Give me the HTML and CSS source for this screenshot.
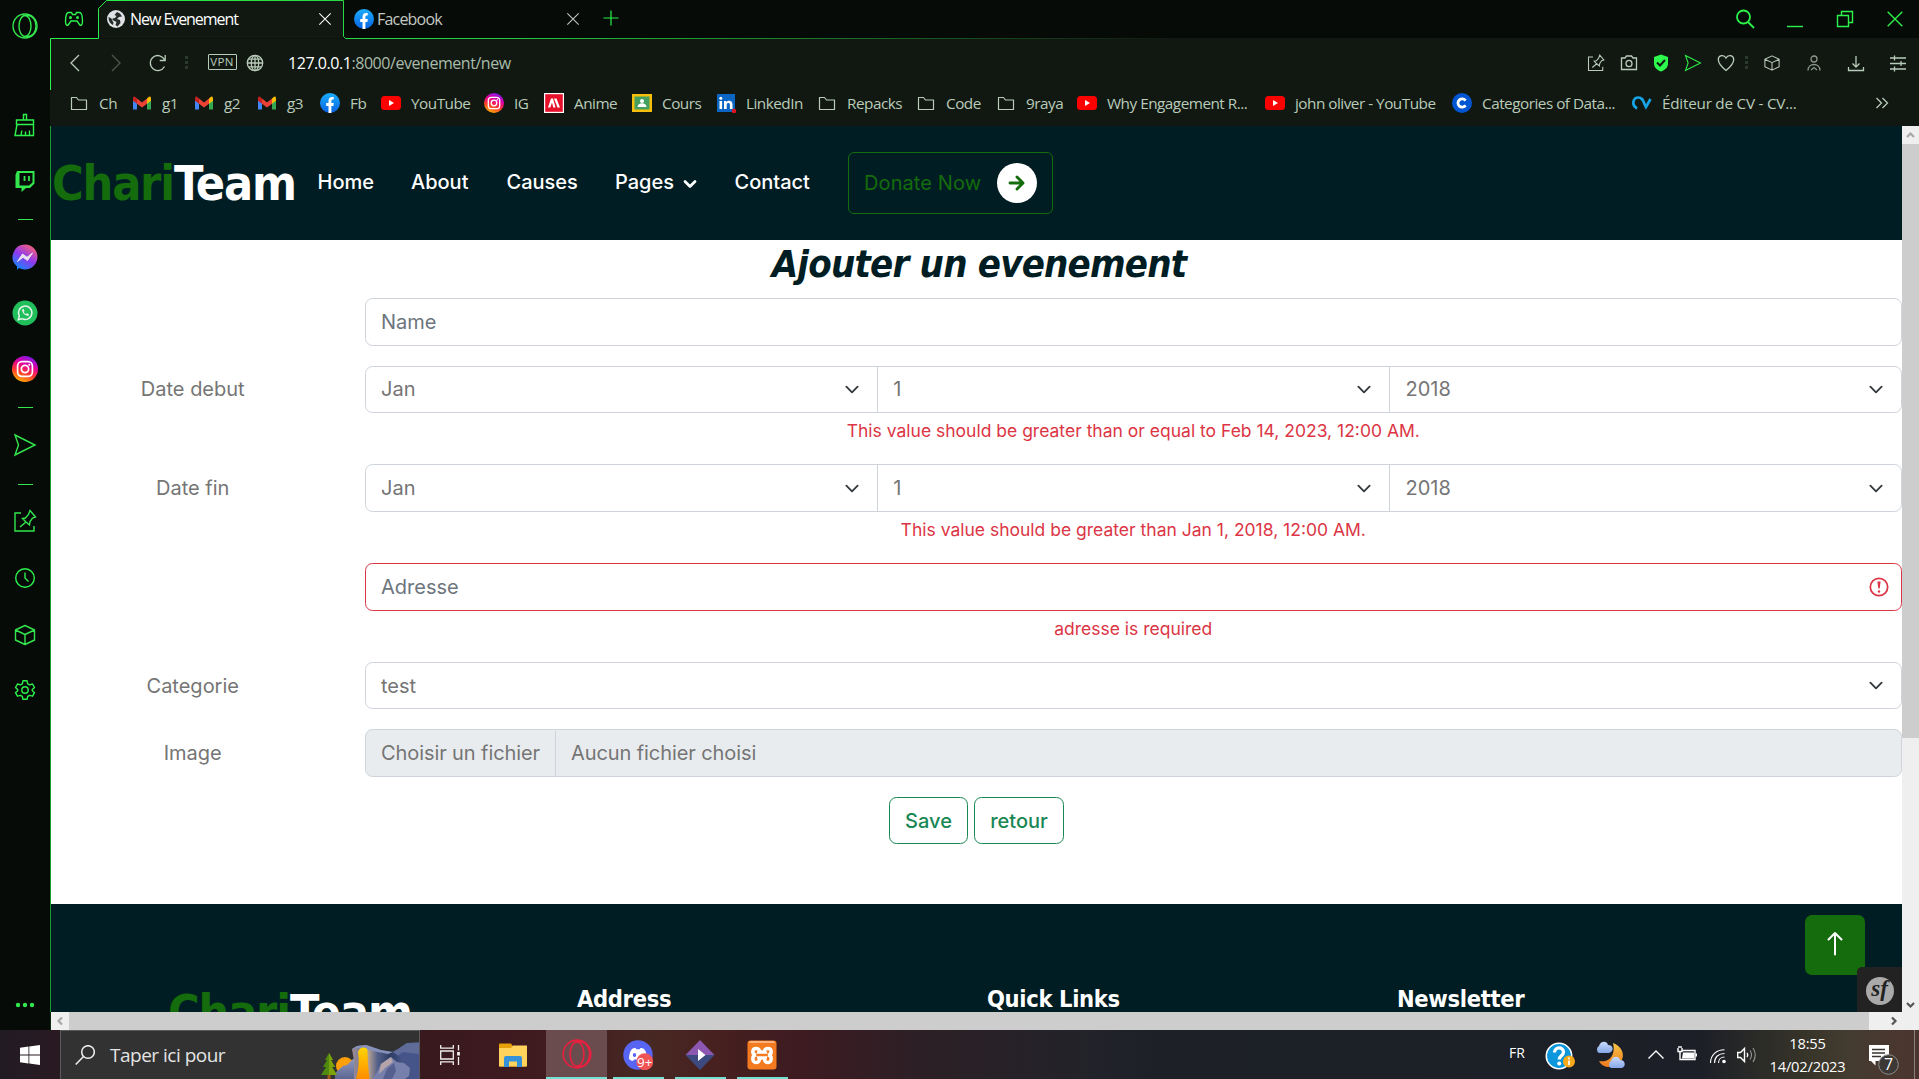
FILE: index.html
```html
<!DOCTYPE html>
<html lang="fr">
<head>
<meta charset="utf-8">
<title>New Evenement</title>
<link rel="stylesheet" href="styles.css">
</head>
<body>
<svg class="defs" aria-hidden="true">
  <defs>
    <linearGradient id="g-fb" x1="0" y1="0" x2="0" y2="1"><stop offset="0" stop-color="#19aefe"/><stop offset="1" stop-color="#0a62e0"/></linearGradient>
    <linearGradient id="g-msg" x1="0.2" y1="1" x2="0.8" y2="0"><stop offset="0" stop-color="#0a8dff"/><stop offset="0.5" stop-color="#9038ef"/><stop offset="1" stop-color="#ff6470"/></linearGradient>
    <linearGradient id="g-ig" x1="0.3" y1="1" x2="0.7" y2="0"><stop offset="0" stop-color="#ffb300"/><stop offset="0.35" stop-color="#ff3a2f"/><stop offset="0.65" stop-color="#e4009b"/><stop offset="1" stop-color="#7a1cf0"/></linearGradient>
    <linearGradient id="g-rock" x1="0" y1="0" x2="1" y2="0"><stop offset="0" stop-color="#a08d93"/><stop offset="0.18" stop-color="#77799a"/><stop offset="0.32" stop-color="#b5a193"/><stop offset="0.5" stop-color="#53608a"/><stop offset="0.75" stop-color="#2c3c62"/><stop offset="1" stop-color="#46568a"/></linearGradient>
    <linearGradient id="g-rock2" x1="0" y1="0" x2="0" y2="1"><stop offset="0" stop-color="#8d97bd"/><stop offset="1" stop-color="#5c6692"/></linearGradient>
    <linearGradient id="g-fall" x1="0" y1="0" x2="0" y2="1"><stop offset="0" stop-color="#ffd400"/><stop offset="1" stop-color="#ff8c00"/></linearGradient>
    <linearGradient id="g-moon" x1="0" y1="0" x2="0" y2="1"><stop offset="0" stop-color="#f6c445"/><stop offset="1" stop-color="#ee7a1c"/></linearGradient>
    <linearGradient id="g-cloud" x1="0" y1="0" x2="0" y2="1"><stop offset="0" stop-color="#c9dcfb"/><stop offset="1" stop-color="#86a7e8"/></linearGradient>
  </defs>
  <symbol id="folder" viewBox="0 0 20 20"><path d="M2.500 4.500h5l2 2.500h8v9.500h-15z" fill="none" stroke="#b9cbb9" stroke-width="1.200" stroke-linejoin="round"/></symbol>
  <symbol id="gmail" viewBox="0 0 20 20"><path d="M1 5v11.500h4V8z" fill="#4285f4"/><path d="M19 5v11.500h-4V8z" fill="#34a853"/><path d="M15 5.500l2-1.700q2-.8 2 1.700v2.200l-4 3z" fill="#fbbc04"/><path d="M5 5.500L3 3.800Q1 3 1 5.500v2.200l4 3z" fill="#c5221f"/><path d="M5 5.500l5 3.900 5-3.900v5.200l-5 3.900-5-3.900z" fill="#ea4335"/></symbol>
  <symbol id="fb" viewBox="0 0 20 20"><circle cx="10" cy="10" r="10" fill="url(#g-fb)"/><path d="M8.500 20v-7H6.200v-3h2.300V8c0-2.500 1.300-3.900 3.700-3.900.7 0 1.500.1 1.500.1v2.400h-1c-1 0-1.300.6-1.300 1.300V10h2.400l-.4 3h-2v7z" fill="#fff"/></symbol>
  <symbol id="yt" viewBox="0 0 20 20"><rect y="3" width="20" height="14" rx="3.500" fill="#f00"/><path d="M8 7l5 3-5 3z" fill="#fff"/></symbol>
  <symbol id="ig" viewBox="0 0 20 20"><circle cx="10" cy="10" r="10" fill="url(#g-ig)"/><rect x="4.300" y="4.300" width="11.400" height="11.400" rx="3.300" fill="none" stroke="#fff" stroke-width="1.300"/><circle cx="10" cy="10" r="2.800" fill="none" stroke="#fff" stroke-width="1.300"/><circle cx="13.300" cy="6.700" r=".8" fill="#fff"/></symbol>
  <symbol id="ani" viewBox="0 0 20 20"><path d="M0 0h20v20H0z" fill="#fff"/><path d="M1.200 1.200h17.600v17.600H1.200z" fill="#e5112b"/><path d="M4 14.500L7 5.500h2l2.500 9H9.300L8 9.500l-1.700 5zM10 5.500h2.500l3.500 9h-2.500z" fill="#fff"/></symbol>
  <symbol id="cours" viewBox="0 0 20 20"><path d="M0 1h20v18H0z" fill="#f6bf0b"/><path d="M2.500 3.500h15v13h-15z" fill="#45a05f"/><circle cx="10" cy="8" r="2" fill="#fff"/><path d="M5.500 14c0-5 9-5 9 0z" fill="#fff"/></symbol>
  <symbol id="in" viewBox="0 0 20 20"><path d="M1 1h18v18H1z" fill="#0a66c2"/><path d="M3.500 8h2.600v8H3.500zM8 8h2.500v1.200c1.500-2.500 6-1.700 6 2V16h-2.600v-4.300c0-2.300-3.200-2.200-3.200 0V16H8z" fill="#fff"/><circle cx="4.800" cy="5.300" r="1.500" fill="#fff"/><circle cx="18" cy="18" r="2.200" fill="#e0131e"/></symbol>
  <symbol id="cc" viewBox="0 0 20 20"><circle cx="10" cy="10" r="10" fill="#0056d2"/><path d="M13.600 7.600a4.200 4.200 0 1 0 0 4.800" fill="none" stroke="#fff" stroke-width="2.800"/></symbol>
  <symbol id="cv" viewBox="0 0 20 20"><path d="M5 15.500C-1 12 1 4.500 6.500 4.500c4.500 0 4.500 4 7.500 9.500L18.500 6" fill="none" stroke="#18a3e2" stroke-width="2.700"/></symbol>
  <symbol id="x" viewBox="0 0 16 16"><path d="M1.500 1.500l13 13M14.500 1.500l-13 13" fill="none" stroke="currentColor" stroke-width="1.200"/></symbol>
  <symbol id="opera" viewBox="0 0 30 30"><g fill="none" stroke="currentColor" stroke-width="1.400"><circle cx="15" cy="15" r="12"/><ellipse cx="15" cy="15" rx="6" ry="10.500"/><path d="M15 4.500C23 3 26 10 26 15s-3 12-11 10.500"/></g></symbol>
  <symbol id="pin" viewBox="0 0 24 24"><g fill="none" stroke="currentColor" stroke-width="1.400"><path d="M8 4H2v18h19v-5"/><path d="M17 1.500L22.500 8l-3 1-2.500 3.500-.5 3.500-3.500-3-3.500-3.500 3-.5 3-3.500zM13 13l-6 5"/></g></symbol>
  <symbol id="send" viewBox="0 0 24 24"><path d="M2 2l20 10L2 22l3.500-10z" fill="none" stroke="currentColor" stroke-width="1.400"/></symbol>
  <symbol id="cube" viewBox="0 0 24 24"><path d="M12 2.500l9.500 4.500v10L12 21.500 2.500 17V7zM2.500 7L12 11.500 21.500 7M12 11.500v10" fill="none" stroke="currentColor" stroke-width="1.400" stroke-linejoin="round"/></symbol>
  <symbol id="chev" viewBox="0 0 16 16"><path d="M2 5l6 6 6-6" fill="none" stroke="#343a40" stroke-width="2" stroke-linecap="round" stroke-linejoin="round"/></symbol>
</svg>

<div class="screen">
  <aside class="sidebar">
    <svg class="i30"><use href="#opera"/></svg>
    <span></span>
    <svg class="i24" viewBox="0 0 24 24"><g class="ln"><path d="M10.500 7V1.500h3V7M3.500 7h17v4.500h-17zM4 11.500L2 22.500h18.500v-11M8 22.500l.8-5M12.500 22.500v-4M16.500 22.500v-5"/></g></svg>
    <svg class="i24" viewBox="0 0 24 24"><path d="M4 2h17.500v12.500L17 19h-4l-4.500 4v-4H2.500V6z" fill="#33e64d"/><path d="M6.500 4h13v9.500l-3.500 3H6.500z" fill="#070b08"/><path d="M11.500 7v5M16 7v5" stroke="#33e64d" stroke-width="1.800"/></svg>
    <i class="dash"></i>
    <svg class="i26" viewBox="0 0 26 26"><path d="M13 .5a12.500 12.500 0 1 1-6 23.500L5 25.800V22.500A12.500 12.500 0 0 1 13 .5z" fill="url(#g-msg)"/><path d="M5.500 17.500l5-7.500 4.500 3.300 5.500-4.300-5 7.500-4.500-3.300z" fill="#e8e2ee" stroke="#e8e2ee" stroke-linejoin="round"/></svg>
    <svg class="i26" viewBox="0 0 26 26"><circle cx="13" cy="13" r="12.500" fill="#20bf5b"/><path d="M6.300 19.700l1-3.700a6.700 6.700 0 1 1 2.700 2.700z" fill="none" stroke="#e8f3eb" stroke-width="1.500"/><path d="M10.500 9.200c-2 2 3.500 8 6.200 6.200l.3-1.200-1.900-1-1 .9c-1.200-.4-2-1.300-2.400-2.400l.8-.8-.8-1.900z" fill="#e8f3eb"/></svg>
    <svg class="i26"><use href="#ig"/></svg>
    <i class="dash"></i>
    <svg class="i24"><use href="#send"/></svg>
    <i class="dash"></i>
    <svg class="i24"><use href="#pin"/></svg>
    <svg class="i24" viewBox="0 0 24 24"><g class="ln"><circle cx="12" cy="12" r="9.300"/><path d="M12 6.500V12l3.500 3.500"/></g></svg>
    <svg class="i24"><use href="#cube"/></svg>
    <svg class="i24" viewBox="0 0 24 24"><g class="ln"><circle cx="12" cy="12" r="3.200"/><path d="M10 2.800h4l.7 3 1.900 1.100 2.900-.9 2 3.500-2.200 2v1.200l2.200 2-2 3.500-2.900-.9-1.900 1.100-.7 2.900h-4l-.7-2.900-1.900-1.100-2.900.9-2-3.500 2.200-2v-1.200l-2.200-2 2-3.500 2.900.9 1.900-1.100z" stroke-linejoin="round"/></g></svg>
    <span></span>
    <svg class="dots" viewBox="0 0 20 6"><circle cx="3" cy="3" r="2.200"/><circle cx="10" cy="3" r="2.200"/><circle cx="17" cy="3" r="2.200"/></svg>
  </aside>

  <header class="chrome">
    <div class="tabs">
      <svg class="pad" viewBox="0 0 20 16"><g class="ln"><path d="M4.500 1.500h3l1 2h3l1-2h3c2 0 3 4 3 9 0 4-2 4.500-3 3l-2.500-3.500h-6L4.500 13.500c-1 1.500-3 1-3-3 0-5 1-9 3-9z"/><circle cx="6.500" cy="6.500" r=".8"/><circle cx="13.500" cy="6.500" r=".8"/></g></svg>
      <div class="tab active">
        <svg class="i18" viewBox="0 0 18 18"><circle cx="9" cy="9" r="9" fill="#dfe1e5"/><path d="M10 2l3 1.500 2 3-3 .5-2 2 3 1 .5 3-3 3.500-2-1.500 1-3-4-2 0-1.500 2.500-.5 1.500-2-2-1zM1.500 7l3 1.500 1 2.500 1 1.500-.5 2.500C3 13.500 1.500 11 1.500 7z" fill="#252b27"/></svg>
        <span class="tab-title">New Evenement</span>
        <svg class="i14"><use href="#x"/></svg>
      </div>
      <div class="tab">
        <svg class="i20"><use href="#fb"/></svg>
        <span class="tab-title">Facebook</span>
        <svg class="i14"><use href="#x"/></svg>
      </div>
      <svg class="plus" viewBox="0 0 16 16"><path d="M8 .5v15M.5 8h15"/></svg>
      <div class="win">
        <svg class="i20" viewBox="0 0 20 20"><g class="ln big"><circle cx="8.500" cy="8" r="6.500"/><path d="M13 13l6 6"/></g></svg>
        <svg class="i20" viewBox="0 0 20 20"><path d="M2 17.500h16" class="ln"/></svg>
        <svg class="i20" viewBox="0 0 20 20"><path d="M2.500 6.500h11v11h-11zM6.500 6.500v-4h11v11h-4" class="ln"/></svg>
        <svg class="i18 g"><use href="#x"/></svg>
      </div>
      <svg class="outline" viewBox="0 0 1869 90"><defs><linearGradient id="fade" gradientUnits="userSpaceOnUse" x1="0" x2="1869" y1="0" y2="0"><stop offset="0" stop-color="#2cf24b"/><stop offset=".25" stop-color="#24c93f"/><stop offset=".6" stop-color="#111812"/></linearGradient></defs><path d="M.5 90V38.500h48V8.500l8-8h237v36l2 2H1869" fill="none" stroke="url(#fade)"/></svg>
    </div>
    <div class="toolbar">
      <svg class="i18" viewBox="0 0 18 18"><path d="M13 1L5 9l8 8" class="lt"/></svg>
      <svg class="i18 dim" viewBox="0 0 18 18"><path d="M5 1l8 8-8 8" class="lt"/></svg>
      <svg class="i20" viewBox="0 0 20 20"><path d="M16.500 13.500a7.500 7.500 0 1 1 .2-6.500M17.200 2v5.500h-5.500" class="lt"/></svg>
      <i class="vdots"></i>
      <span class="vpn">VPN</span>
      <svg class="i18" viewBox="0 0 18 18"><g class="lt"><circle cx="9" cy="9" r="7.700"/><ellipse cx="9" cy="9" rx="3.700" ry="7.700"/><path d="M9 1.300v15.400M1.300 9h15.400M2.500 5.200h13M2.500 12.800h13"/></g></svg>
      <div class="url"><b>127.0.0.1</b>:8000/evenement/new</div>
      <div class="actions">
        <svg class="i18"><use href="#pin"/></svg>
        <svg class="i18" viewBox="0 0 18 18"><g class="lt"><path d="M1.500 4H5l1.500-2h5L13 4h3.500v11.500h-15z"/><ellipse cx="9" cy="9.500" rx="3" ry="3.200"/></g></svg>
        <svg class="i18" viewBox="0 0 18 18"><path d="M9 .5l7 2.500v6.500c0 4-3 6.500-7 8-4-1.500-7-4-7-8V3z" fill="#2cfa4c"/><path d="M5 8.500l3 3 5-5.500" fill="none" stroke="#111812" stroke-width="2"/></svg>
        <svg class="i18 g"><use href="#send"/></svg>
        <svg class="i18" viewBox="0 0 18 18"><path d="M9 16.500C4 12.500 1.300 9.500 1.300 5.500 1.300 1 7 .2 9 4c2-3.800 7.700-3 7.700 1.500 0 4-2.700 7-7.700 11z" class="lt"/></svg>
        <i class="vdots"></i>
        <svg class="i18"><use href="#cube"/></svg>
        <svg class="i18" viewBox="0 0 18 18"><g class="lt person"><circle cx="9" cy="5" r="3"/><path d="M3 16.500c0-8 12-8 12 0M6 16l3-2.500 3 2.500"/></g></svg>
        <svg class="i18" viewBox="0 0 18 18"><path d="M9 2v10.500M5.500 9.500L9 13l3.500-3.500M1.500 13v3.500h15V13" class="lt"/></svg>
        <svg class="i18" viewBox="0 0 18 18"><path d="M1 4h16M1 9.500h16M1 15h16M5.500 1.500v5M12 7v5M5.500 12.500v5" class="lt"/></svg>
      </div>
    </div>
    <nav class="marks">
      <a><svg><use href="#folder"/></svg>Ch</a>
      <a><svg><use href="#gmail"/></svg>g1</a>
      <a><svg><use href="#gmail"/></svg>g2</a>
      <a><svg><use href="#gmail"/></svg>g3</a>
      <a><svg><use href="#fb"/></svg>Fb</a>
      <a><svg><use href="#yt"/></svg>YouTube</a>
      <a><svg><use href="#ig"/></svg>IG</a>
      <a><svg><use href="#ani"/></svg>Anime</a>
      <a><svg><use href="#cours"/></svg>Cours</a>
      <a><svg><use href="#in"/></svg>LinkedIn</a>
      <a><svg><use href="#folder"/></svg>Repacks</a>
      <a><svg><use href="#folder"/></svg>Code</a>
      <a><svg><use href="#folder"/></svg>9raya</a>
      <a><svg><use href="#yt"/></svg>Why Engagement R...</a>
      <a><svg><use href="#yt"/></svg>john oliver - YouTube</a>
      <a><svg><use href="#cc"/></svg>Categories of Data...</a>
      <a class="wide"><svg><use href="#cv"/></svg>Éditeur de CV - CV...</a>
      <svg class="more" viewBox="0 0 14 14"><path d="M1.500 2l5 5-5 5M7.500 2l5 5-5 5" class="lt"/></svg>
    </nav>
  </header>

  <main class="viewport">
    <div class="page">
      <nav class="navbar">
        <div class="logo"><span>Chari</span>Team</div>
        <a class="n1">Home</a><a class="n2">About</a><a class="n3">Causes</a>
        <a class="n4">Pages <svg viewBox="0 0 14 10"><path d="M2 2.500l5 5 5-5" fill="none" stroke="#fff" stroke-width="2.800" stroke-linecap="round" stroke-linejoin="round"/></svg></a>
        <a class="n5">Contact</a>
        <a class="donate">Donate Now<span><svg viewBox="0 0 18 18"><path d="M2 9h12.500M9 3l6 6-6 6" fill="none" stroke="#146c0c" stroke-width="2.900" stroke-linecap="round" stroke-linejoin="round"/></svg></span></a>
      </nav>
      <section class="content">
        <h2>Ajouter un evenement</h2>
        <form>
          <span></span>
          <div class="field ph">Name</div>
          <label>Date debut</label>
          <div>
            <div class="group"><div class="field">Jan<svg><use href="#chev"/></svg></div><div class="field">1<svg><use href="#chev"/></svg></div><div class="field">2018<svg><use href="#chev"/></svg></div></div>
            <p class="error">This value should be greater than or equal to Feb 14, 2023, 12:00 AM.</p>
          </div>
          <label>Date fin</label>
          <div>
            <div class="group"><div class="field">Jan<svg><use href="#chev"/></svg></div><div class="field">1<svg><use href="#chev"/></svg></div><div class="field">2018<svg><use href="#chev"/></svg></div></div>
            <p class="error">This value should be greater than Jan 1, 2018, 12:00 AM.</p>
          </div>
          <span></span>
          <div>
            <div class="field ph invalid">Adresse<svg viewBox="0 0 20 20"><circle cx="10" cy="10" r="8.700" fill="none" stroke="#dc3545" stroke-width="1.700"/><path d="M8.400 4.500h3.200l-.9 7H9.300z" fill="#dc3545"/><circle cx="10" cy="14.500" r="1.200" fill="#dc3545"/></svg></div>
            <p class="error">adresse is required</p>
          </div>
          <label>Categorie</label>
          <div class="field">test<svg><use href="#chev"/></svg></div>
          <label>Image</label>
          <div class="field file"><span>Choisir un fichier</span>Aucun fichier choisi</div>
        </form>
        <div class="buttons"><button class="b1">Save</button><button class="b2">retour</button></div>
      </section>
      <footer class="footer">
        <div class="logo"><span>Chari</span>Team</div>
        <h5>Address</h5><h5>Quick Links</h5><h5>Newsletter</h5>
      </footer>
      <a class="top"><svg viewBox="0 0 20 26"><path d="M10 24.500V3M3.500 9.500L10 3l6.500 6.500" fill="none" stroke="#fff" stroke-width="2" stroke-linecap="round" stroke-linejoin="round"/></svg></a>
      <div class="sf"><span>sf</span></div>
    </div>
    <div class="vbar"><svg viewBox="0 0 17 18"><path d="M5 11l3.500-3.500L12 11" stroke="#a8a8a8"/></svg><i></i><span></span><svg viewBox="0 0 17 18"><path d="M5 8l3.500 3.500L12 8" stroke="#555"/></svg></div>
    <div class="hbar"><svg viewBox="0 0 18 18"><path d="M11 5.500L7.500 9l3.500 3.500" stroke="#a8a8a8"/></svg><i></i><svg viewBox="0 0 18 18"><path d="M7 5.500L10.500 9 7 12.500" stroke="#555"/></svg></div>
  </main>

  <footer class="taskbar">
    <div class="cell"><svg class="i20" viewBox="0 0 20 20"><path d="M0 2.800l8.500-1.200v8H0zM9.300 1.500L20 0v9.600H9.300zM0 10.500h8.500v8L0 17.300zM9.300 10.500H20V20L9.300 18.600z" fill="#fff"/></svg></div>
    <div class="search">
      <svg class="i20" viewBox="0 0 20 20"><g fill="none" stroke="#f0f0f0" stroke-width="1.500"><circle cx="13" cy="7" r="6.300"/><path d="M8.500 11.500L.7 19.500"/></g></svg>
      <span>Taper ici pour</span>
      <svg class="scene" viewBox="0 0 98 37"><path d="M60 37L66 13l11-6 9-6 12-.5V37z" fill="#45558a"/><path d="M66 13l11-6 9-6 12-.5V12L82 10l-10 7z" fill="#5f6c99"/><circle cx="24" cy="24" r="9" fill="#ff9f0a"/><path d="M14 37V31l8-7 4-1 6-6h8v20z" fill="url(#g-rock2)"/><path d="M33 37V19l-2-12 5-3 9-1 15 5 12 2 10 7v20z" fill="url(#g-rock)"/><path d="M31 7l5-3 9-1 15 5 12 2-5 2-20-4-9-2z" fill="#8791ba"/><path d="M37 10q2-6 8-4 2 1 1.500 4 0 13 2 27H35q4-14 2-27z" fill="url(#g-fall)"/><path d="M51 37l4-5 5-10 10-7 6 5 7 1 6 5-1 8-4 3z" fill="#7780aa"/><path d="M60 22l10-7 2 5-8 6-6 6z" fill="#b5a5aa"/><path d="M62 37l4-10 7-6 2 8-4 8z" fill="#566090"/><path d="M8 11l4 7h-2l4 7h-3l5 8H0l5-8H2l4-7H4z" fill="#4f8a10"/><path d="M8 11l4 7h-2l4 7h-3l5 8H8z" fill="#7ca30c"/><path d="M6.500 33h3v4h-3z" fill="#a65a15"/></svg>
    </div>
    <div class="cell"><svg class="i20" viewBox="0 0 20 20"><g fill="none" stroke="#f0f0f0" stroke-width="1.300"><path d="M.7 0v3.200h12.600V0M.7 20v-3.200h12.600V20M.7 6h12.600v8H.7zM18.500 0v5.500M18.500 12v8"/><path d="M18.500 7v3.500" stroke-width="2.800"/></g></svg></div>
    <div class="cell"><svg class="folder" viewBox="0 0 28 24"><path d="M0 1.500Q0 .5 1 .5h11l2 3H28v20H0z" fill="#e8a008"/><path d="M0 5h12l2-2.500h14v20q0 1-1 1H1q-1 0-1-1z" fill="#ffd35c"/><path d="M5 24v-9q0-2 2-2h14q2 0 2 2v9h-5v-5.500h-8V24z" fill="#3591d8"/></svg></div>
    <div class="cell current"><svg class="i30 op" viewBox="2 2 26 26"><use href="#opera" width="30" height="30"/></svg></div>
    <div class="cell run"><svg class="i30" viewBox="0 0 30 30"><circle cx="15" cy="15" r="14.700" fill="#5865f2"/><path d="M6 19c0-4 1-8 3-10 1-.7 2.500-1 3.500-1l.8 1.300h3.400L17.500 8c1 0 2.500.3 3.500 1 2 2 3 6 3 10-1 1-3 2-4 2l-1-1.500h-8L10 21c-1 0-3-1-4-2z" fill="#fff"/><ellipse cx="11.500" cy="15" rx="1.700" ry="2" fill="#5865f2"/><circle cx="21.800" cy="21.800" r="8.500" fill="#f05454"/><text x="21.800" y="26.800" class="badge">9+</text></svg></div>
    <div class="cell run"><svg class="i30" viewBox="0 0 30 30"><path d="M15 0l14.500 15H.5z" fill="#8c57b0"/><path d="M.5 15h29L15 30z" fill="#3d4a80"/><path d="M13 9l7.500 6-7.500 6z" fill="#fff"/></svg></div>
    <div class="cell run"><svg class="i30" viewBox="0 0 30 30"><rect x=".5" y=".5" width="29" height="29" rx="3" fill="#f47a20"/><path d="M2 3q0-2 2-2h22q2 0 2 2z" fill="#ffb27c"/><path d="M9 8.500c-4 0-4.500 6 0 6.500-4.500.500-4 7.500 0 7.500 3.500 0 3.500-3 3-4.500h6c-.5 1.500-.5 4.500 3 4.500 4 0 4.500-7 0-7.500 4.500-.500 4-6.500 0-6.500-3.500 0-3.500 2-3 3.500h-6c.5-1.500.5-3.500-3-3.500z" fill="none" stroke="#fff" stroke-width="3.500"/></svg></div>
    <span></span>
    <div class="cell fr">FR</div>
    <div class="cell"><svg class="i30" viewBox="0 0 30 30"><circle cx="14" cy="16" r="12.700" fill="#0c97dc" stroke="#fff" stroke-width="1.600"/><path d="M9.500 12.500c0-6 9-6 9-.5 0 4-4.300 3.500-4.300 7.500" fill="none" stroke="#fff" stroke-width="3.300"/><circle cx="14.200" cy="23.500" r="2" fill="#fff"/><circle cx="24" cy="21.500" r="6" fill="#f7a81b"/><path d="M24 20.500v4.500M24 17.500v1.700" stroke="#fff" stroke-width="1.700"/></svg></div>
    <div class="cell"><svg class="i30" viewBox="0 0 30 30"><path d="M17 3c14 5 13 22-2 24-6 .500-10-2-12-6 10 2 17-6 14-18z" fill="url(#g-moon)"/><path d="M3 13a4 4 0 0 1 0-7c1-5 8-6 9-1 6 0 6 7 1 8z" fill="url(#g-cloud)"/><path d="M15 28a4 4 0 0 1 0-7c1-5 8-6 9-1 6 0 6 7 2 8z" fill="url(#g-cloud)"/></svg></div>
    <div class="cell"><svg class="i18" viewBox="0 0 18 18"><path d="M1.500 12.500L9 5l7.500 7.500" class="wt"/></svg></div>
    <div class="cell"><svg class="i20" viewBox="0 0 20 20"><path d="M5 5.500h13v9H3v-6" class="wt"/><path d="M6 7.500h11v6H5z" fill="#fff"/><path d="M18.500 8.500h1.500v3h-1.500z" fill="#fff"/><path d="M1 3v3.500h4V3M2 1v2M4 1v2M3 6v3" class="wt"/></svg></div>
    <div class="cell"><svg class="i18" viewBox="0 0 18 18"><circle cx="15" cy="15.500" r="1.800" fill="#fff"/><path d="M9.500 17c0-3.500 2.500-6 6-6M5.500 17c0-6 4-9.500 10-9.500M1.500 17C1.500 9 7.500 3.800 15.500 3.800" class="wt thin"/></svg></div>
    <div class="cell"><svg class="i20" viewBox="0 0 20 20"><path d="M.7 7.500h2.800L7.500 3.500v13l-4-4H.7z" class="wt"/><path d="M10 8q1.500 2 0 4" class="wt"/><path d="M13 5.500q3 4.500 0 9M16 3q4.500 7 0 14" class="wt thin half"/></svg></div>
    <div class="clock"><span>18:55</span><span>14/02/2023</span></div>
    <div class="cell"><svg class="note" viewBox="0 0 32 32"><path d="M1 1h20v16H7.500v4.500L3 17H1z" fill="#fff"/><path d="M4 5.500h13M4 9h13M4 12.500h9" stroke="#3a352f" stroke-width="1.300"/><circle cx="20.500" cy="20.500" r="9.800" fill="#3b3835" stroke="#8f8d8a"/><text x="20.500" y="26" class="seven">7</text></svg></div>
    <i class="desk"></i>
  </footer>
</div>
</body>
</html>
```

FILE: styles.css
```css
* { box-sizing: border-box; }
body { margin: 0; overflow: hidden; background: #070b08; }
svg { display: block; flex: none; }
.defs { position: absolute; width: 0; height: 0; }
.screen {
  width: 1919px; height: 1079px; display: grid;
  grid-template-columns: 50px 1869px; grid-template-rows: 126px 904px 49px;
  font-family: "Open Sans", "Noto Sans", sans-serif;
}
.i14 { width: 14px; height: 14px; }
.i18 { width: 18px; height: 18px; }
.i20 { width: 20px; height: 20px; }
.i24 { width: 24px; height: 24px; }
.i26 { width: 26px; height: 26px; }
.i30 { width: 30px; height: 30px; }
.ln { fill: none; stroke: #2cf24b; stroke-width: 1.4; }
.ln.big { stroke-width: 1.8; }
.lt { fill: none; stroke: #b9cbb9; stroke-width: 1.3; }
.wt { fill: none; stroke: #fff; stroke-width: 1.4; }
.thin { stroke-width: 1.1; }
.half { opacity: .5; }
.g { color: #2cf24b; }

/* browser sidebar */
.sidebar {
  grid-row: 1 / 3; background: #070b08; color: #33e64d; display: grid;
  grid-template-rows: 51px 49px 50px 62px 14px 62px 50px 62px 14px 62px 16px 58px 56px 58px 52px 1fr 30px;
  padding-bottom: 10px; place-items: center;
}
.dash { width: 15px; height: 1px; background: #33e64d; }
.dots { width: 20px; height: 6px; fill: #33e64d; }

/* browser header */
.chrome { display: grid; grid-template-rows: 39px 49px 38px; background: #111812; color: #b9cbb9; }
.tabs { position: relative; display: flex; align-items: center; background: #070b08; padding-bottom: 1px; }
.outline { position: absolute; left: 0; top: 0; width: 1869px; height: 90px; pointer-events: none; }
.pad { width: 20px; height: 16px; margin: 0 14px; }
.tab { height: 38px; display: flex; align-items: center; width: 238px; padding-left: 11px; font-size: 16px; letter-spacing: -.8px; color: #c3c8c3; }
.tab.active { width: 245px; padding-left: 9px; background: #111812; color: #fff; letter-spacing: -1.050px; clip-path: polygon(0 9px, 9px 0, 100% 0, 100% 100%, 0 100%); height: 39px; }
.tab-title { flex: 1; padding: 0 0 0 3px; white-space: nowrap; }
.active .tab-title { padding-left: 5px; }
.tab .i14 { margin-right: 11px; }
.tab:not(.active) .i14 { margin-right: 1px; }
.plus { width: 16px; height: 16px; margin: -2px 0 0 22px; stroke: #2cf24b; stroke-width: 1.200; }
.win { margin: -1px -1px 0 auto; width: 200px; display: grid; grid-template-columns: repeat(4, 50px); place-items: center; }
.toolbar { display: grid; align-items: center; justify-items: center; grid-template-columns: 50px 31px 53px 4px 56px 22px 1fr 339px; padding-bottom: 1px; }
.dim { opacity: .35; }
.vdots { width: 3px; height: 14px; background: repeating-linear-gradient(#2a3a2c 0 3px, transparent 3px 5px); }
.vpn { width: 29px; height: 16px; border: 1px solid #b9cbb9; border-radius: 1px; font: 11.500px/14px "Open Sans", sans-serif; text-align: center; letter-spacing: .3px; margin: 0 0 2px 12px; }
.vpn + svg { margin-bottom: 1px; }
.url { justify-self: start; padding-left: 22px; font-size: 16px; letter-spacing: -.45px; color: #a9bba9; }
.url b { font-weight: 400; color: #fff; }
.actions { display: grid; grid-template-columns: repeat(5, 32.400px) 9px repeat(4, 42px); place-items: center; }
.person { stroke: #8b9a8b; }
.marks {
  display: grid; align-items: center; padding: 0 0 8px 19px; font-size: 15.300px; letter-spacing: -.5px;
  grid-template-columns: 63px 62px 63px 63px 61px 103px 60px 88px 84px 101px 99px 80px 81px 188px 187px 180px 1fr 44px;
}
.marks a { display: flex; align-items: center; gap: 10px; white-space: nowrap; }
.marks .wide { letter-spacing: -.25px; }
.marks a svg { width: 20px; height: 20px; }
.more { width: 14px; height: 14px; }

/* page area with its scrollbars */
.viewport { display: grid; grid-template-columns: 1852px 17px; grid-template-rows: 886px 18px; }
.page { position: relative; overflow: hidden; background: #fff; border-left: 1px solid #189a2c; font-family: Inter, sans-serif; font-size: 20px; color: #757575; display: flex; flex-direction: column; }
.navbar { flex: none; height: 114px; background: #001d23; color: #fff; font-weight: 500; display: flex; align-items: center; }
.logo { font: 700 48px/56px "DejaVu Sans Condensed", "DejaVu Sans", sans-serif; font-stretch: condensed; color: #fff; letter-spacing: -1.150px; white-space: nowrap; }
.logo span { color: #146c0c; }
.navbar .logo { width: 266.500px; padding-left: 1px; }
.navbar a { white-space: nowrap; padding-bottom: 2px; }
.n1 { width: 93.500px; } .n2 { width: 95.500px; } .n3 { width: 108.500px; } .n4 { width: 119.500px; } .n5 { width: 113.500px; }
.n4 svg { display: inline-block; width: 14px; height: 10px; margin-left: 4px; }
.navbar .donate { width: 205px; height: 62px; border: 1px solid #146c0c; border-radius: 6px; color: #146c0c; font-weight: 400; display: flex; align-items: center; justify-content: space-between; padding: 0 15px; letter-spacing: .1px; }
.donate span { width: 40px; height: 40px; border-radius: 50%; background: #fff; display: grid; place-items: center; }
.donate svg { width: 18px; height: 18px; }

.content { height: 664px; flex: none; }
h2 { margin: 0 0 10px; padding-left: 5px; font: italic 700 38px/48px "DejaVu Sans Condensed", "DejaVu Sans", sans-serif; font-stretch: condensed; letter-spacing: -.8px; color: #001d23; text-align: center; }
form { display: grid; row-gap: 20px; margin-left: -15px; width: 1866px; column-gap: 15px; grid-template-columns: 313.500px 1537.500px; }
label { text-align: center; line-height: 30px; padding-top: 8.750px; }
.field { height: 47.500px; border: 1px solid #ced4da; border-radius: 7.500px; padding: 1px 15px 0 15.500px; line-height: 45px; display: flex; align-items: center; justify-content: space-between; background: #fff; }
.field svg { width: 20px; height: 15px; margin-top: -1px; }
.ph { color: #6c757d; }
.group { display: grid; grid-template-columns: 513.200px 512.800px 512.500px; width: 1537.500px; }
.group .field + .field { margin-left: -1px; }
.group .field:first-child { border-radius: 7.500px 0 0 7.500px; }
.group .field:nth-child(2) { border-radius: 0; }
.group .field:last-child { border-radius: 0 7.500px 7.500px 0; margin-right: 1px; padding-left: 15px; }
.error { margin: 5px 0 0; font-size: 17.500px; line-height: 26.250px; color: #dc3545; text-align: center; }
.field.invalid { border-color: #dc3545; padding-right: 12.500px; }
.invalid svg { width: 20px; height: 20px; }
.file { background: #e9ecef; justify-content: flex-start; gap: 15px; letter-spacing: -.09px; }
.file span { padding-right: 15px; border-right: 1px solid #ced4da; }
.buttons { display: flex; justify-content: center; gap: 6px; margin-top: 20px; }
button { height: 47.500px; padding: 0; border: 1px solid #198754; border-radius: 7.500px; background: #fff; color: #198754; font: 500 20px Inter, sans-serif; }
.b1 { width: 79px; } .b2 { width: 90px; }

.footer { flex: 1; min-height: 0; background: #001d23; padding-top: 80px; display: grid; grid-template-columns: 409px 410px 410px 1fr; padding-left: 117px; overflow: hidden; }
h5 { margin: 0; font: 700 23.500px/30px "DejaVu Sans Condensed", "DejaVu Sans", sans-serif; font-stretch: condensed; letter-spacing: -.35px; color: #fff; }
.top { position: absolute; right: 37px; top: 789px; width: 60px; height: 60px; border-radius: 7px; background: #146c0c; display: grid; place-items: center; }
.top svg { width: 20px; height: 26px; margin-bottom: 4px; }
.sf { position: absolute; right: 0; bottom: 0; width: 45px; height: 45px; background: #222; border-radius: 5px 0 0; display: grid; place-items: center; }
.sf span { width: 28px; height: 28px; border-radius: 50%; background: #aaa; color: #222; font: italic 700 23px/24px "Liberation Serif", serif; text-align: center; margin-top: 2px; }
.vbar { display: grid; grid-template-rows: 18px 594px 1fr 17px; background: #efefef; }
.vbar i, .hbar i { background: #cdcdcd; }
.vbar svg { width: 17px; height: 18px; fill: none; stroke-width: 2.200; }
.hbar { grid-column: 1 / 3; display: grid; grid-template-columns: 18px 1800px 34px; background: #efefef; border-left: 1px solid #0b2a10; }
.hbar svg { width: 18px; height: 18px; fill: none; stroke-width: 2.200; justify-self: end; }
.hbar svg:first-child { justify-self: start; }

/* Windows taskbar */
.taskbar {
  grid-column: 1 / 3; display: grid; align-items: stretch; color: #fff;
  grid-template-columns: 60px 360px 60px 66px 61px 62px 62px 62px 1fr 44px 42px 60px 30px 31px 31px 28px 93px 60px 5px;
  background: linear-gradient(90deg, #211b24 0, #2a1a22 60px, #38191e 420px, #401b1f 546px, #472823 650px, #47201f 720px, #3d1b21 800px, #2c2026 920px, #22232a 1100px, #1d2127 1150px, #1c1f27 1700px, #353328 1800px, #443c30 1850px, #4c352f 1919px);
}
.cell { display: grid; place-items: center; }
.search { background: #323232; border: 1px solid #5a5a5a; border-bottom: 0; display: flex; align-items: center; padding-left: 14px; overflow: hidden; font-size: 19px; letter-spacing: -.5px; color: #e4e4e4; }
.search span { margin-left: 15px; flex: 1; }
.scene { width: 98px; height: 37px; align-self: flex-end; }
.folder { width: 28px; height: 24px; }
.current { background: #6a4c4e; border-bottom: 2px solid #76e0d2; }
.op { color: #e8203f; }
.run { background: linear-gradient(#76e0d2, #76e0d2) center bottom / 51px 2px no-repeat; }
.badge { font: 13.500px "Open Sans", sans-serif; fill: #fff; text-anchor: middle; }
.fr { font-size: 14px; padding-bottom: 5px; }
.clock { display: flex; flex-direction: column; align-items: center; font-size: 14.700px; line-height: 23px; padding-top: 2px; letter-spacing: -.2px; }
.note { width: 32px; height: 32px; margin-top: 11px; }
.seven { font: 16px "Open Sans", sans-serif; fill: #fff; text-anchor: middle; }
.desk { border-left: 1px solid #8a7f7a; }
```
